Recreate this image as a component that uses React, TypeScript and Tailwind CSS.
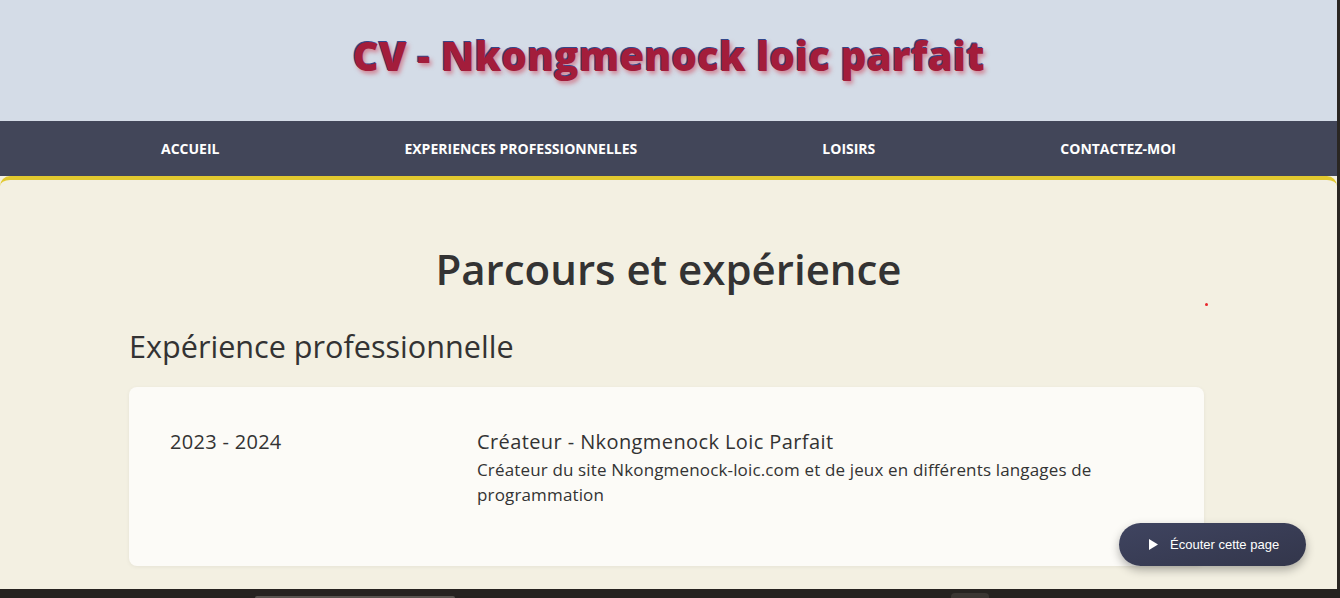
import React from "react"

const navItems = ["Accueil", "Experiences professionnelles", "Loisirs", "Contactez-moi"]

const font = { fontFamily: '"Open Sans", "Liberation Sans", sans-serif' }

export default function App() {
  return (
    <div className="flex h-[598px] w-[1340px] flex-col overflow-hidden bg-[#262320]" style={font}>
      <div className="flex min-h-0 flex-1">
        <div className="relative flex min-w-0 flex-1 flex-col bg-[#f3f0e2]">
          <header className="flex h-[121px] items-center justify-center bg-[#d4dce7] pb-[9px]">
            <h1 className="text-[40.5px] font-extrabold text-[#a31d3b] [text-shadow:-1px_-1px_0_#34478a,2px_3px_4px_rgba(205,70,90,0.55)]">
              CV - Nkongmenock loic parfait
            </h1>
          </header>

          <nav className="bg-[#424659]">
            <ul className="mx-auto flex h-[55px] max-w-[1200px] items-center justify-around">
              {navItems.map((item) => (
                <li key={item} className="text-[14px] font-bold uppercase text-white">
                  {item}
                </li>
              ))}
            </ul>
          </nav>

          <main className="flex-1 rounded-t-[10px] border-t-4 border-[#e2c92f] bg-[#f3f0e2]">
            <h2 className="mt-[57px] text-center text-[42px] font-semibold text-[#333]">Parcours et expérience</h2>

            <section className="ml-[129px] mt-[24px] w-[1075px]">
              <h3 className="text-[30.6px] text-[#333]">Expérience professionnelle</h3>
              <div className="mt-[17px] flex rounded-lg bg-[#fcfbf7] pb-[59px] pl-[41px] pr-10 pt-[40px] shadow-[0_1px_4px_rgba(0,0,0,0.06)]">
                <div className="w-[307px] shrink-0 text-[20px] font-medium tracking-[0.3px] text-[#333]">2023 - 2024</div>
                <div className="flex-1">
                  <div className="text-[20px] font-medium tracking-[0.4px] text-[#333]">Créateur - Nkongmenock Loic Parfait</div>
                  <p className="max-w-[640px] text-[17px] leading-[25px] tracking-[0.15px] text-[#333]">
                    Créateur du site Nkongmenock-loic.com et de jeux en différents langages de programmation
                  </p>
                </div>
              </div>
            </section>
          </main>

          <span className="absolute left-[1205px] top-[303px] h-[3px] w-[3px] rounded-full bg-[#e8262b]" />

          <button
            className="absolute left-[1119px] top-[523px] flex h-[43px] w-[187px] items-center gap-3 rounded-full bg-gradient-to-br from-[#3f4460] to-[#33364b] pl-[30px] text-[13px] font-medium text-white shadow-[0_4px_10px_rgba(0,0,0,0.3)]"
            style={{ fontFamily: '"Liberation Sans", Arial, sans-serif' }}
          >
            <svg width="9" height="11" viewBox="0 0 9 11">
              <path d="M0 0 L9 5.5 L0 11 Z" fill="white" />
            </svg>
            Écouter cette page
          </button>
        </div>
        <div className="w-[3px] bg-[#2a2622]" />
      </div>

      <div className="flex h-[9px] items-end">
        <div className="ml-[255px] h-[2px] w-[200px] rounded-t bg-[#5a5651]" />
        <div className="ml-[496px] h-[5px] w-[38px] rounded-t bg-[#3a3632]" />
      </div>
    </div>
  )
}
